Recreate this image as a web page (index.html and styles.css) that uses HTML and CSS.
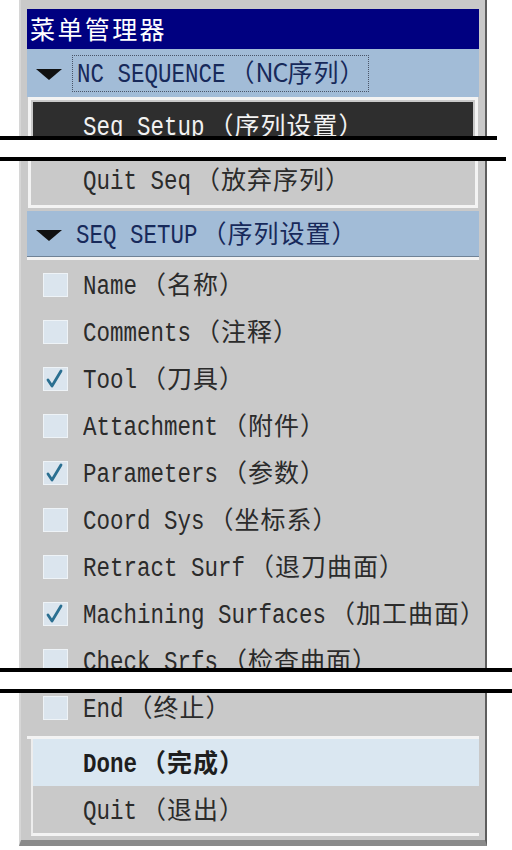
FILE: index.html
```html
<!DOCTYPE html>
<html lang="zh">
<head>
<meta charset="utf-8">
<title>菜单管理器</title>
<link rel="stylesheet" href="styles.css">
</head>
<body>
<div class="panel">
  <div class="title">菜单管理器</div>
  <div class="hdr">
    <span class="tri"></span>
    <span class="focus"><span class="lbl"><span class="en">NC SEQUENCE</span><span class="zh">（<span class="nc">NC</span>序列）</span></span></span>
  </div>
  <div class="group g1">
    <div class="row sel"><span class="lbl"><span class="en">Seq Setup</span><span class="zh">（序列设置）</span></span></div>
    <div class="row quitseq"><span class="lbl"><span class="en">Quit Seq</span><span class="zh">（放弃序列）</span></span></div>
  </div>
  <div class="hdr hdr2">
    <span class="tri"></span>
    <span class="htext"><span class="lbl"><span class="en">SEQ SETUP</span><span class="zh">（序列设置）</span></span></span>
  </div>
  <div class="group g2">
    <div class="row chk"><span class="box"></span><span class="lbl"><span class="en">Name</span><span class="zh">（名称）</span></span></div>
    <div class="row chk"><span class="box"></span><span class="lbl"><span class="en">Comments</span><span class="zh">（注释）</span></span></div>
    <div class="row chk"><span class="box"><svg viewBox="0 0 25 24" width="25" height="24"><path d="M5 13 L9 19 L18 4" fill="none" stroke="#2a6f91" stroke-width="2.8" stroke-linecap="round" stroke-linejoin="round"/></svg></span><span class="lbl"><span class="en">Tool</span><span class="zh">（刀具）</span></span></div>
    <div class="row chk"><span class="box"></span><span class="lbl"><span class="en">Attachment</span><span class="zh">（附件）</span></span></div>
    <div class="row chk"><span class="box"><svg viewBox="0 0 25 24" width="25" height="24"><path d="M5 13 L9 19 L18 4" fill="none" stroke="#2a6f91" stroke-width="2.8" stroke-linecap="round" stroke-linejoin="round"/></svg></span><span class="lbl"><span class="en">Parameters</span><span class="zh">（参数）</span></span></div>
    <div class="row chk"><span class="box"></span><span class="lbl"><span class="en">Coord Sys</span><span class="zh">（坐标系）</span></span></div>
    <div class="row chk"><span class="box"></span><span class="lbl"><span class="en">Retract Surf</span><span class="zh">（退刀曲面）</span></span></div>
    <div class="row chk"><span class="box"><svg viewBox="0 0 25 24" width="25" height="24"><path d="M5 13 L9 19 L18 4" fill="none" stroke="#2a6f91" stroke-width="2.8" stroke-linecap="round" stroke-linejoin="round"/></svg></span><span class="lbl"><span class="en">Machining Surfaces</span><span class="zh">（加工曲面）</span></span></div>
    <div class="row chk"><span class="box"></span><span class="lbl"><span class="en">Check Srfs</span><span class="zh">（检查曲面）</span></span></div>
    <div class="row chk"><span class="box"></span><span class="lbl"><span class="en">End</span><span class="zh">（终止）</span></span></div>
  </div>
  <div class="group g3">
    <div class="row done"><span class="lbl"><span class="en">Done</span><span class="zh">（完成）</span></span></div>
    <div class="row plain"><span class="lbl"><span class="en">Quit</span><span class="zh">（退出）</span></span></div>
  </div>
</div>
<div class="cut cut1"></div>
<div class="cut cut2"></div>
</body>
</html>
```

FILE: styles.css
```css
html, body {
  margin: 0;
  padding: 0;
  background: #ffffff;
}

body {
  position: relative;
  width: 512px;
  height: 850px;
  overflow: hidden;
  font-family: "Liberation Mono", "Noto Sans CJK SC", monospace;
}

.panel {
  margin-left: 19px;
  width: 452px;
  padding: 9px 6px 4px 6px;
  background: #c9c9c9;
  border-left: 2px solid #d6d6d6;
  border-right: 2px solid #5e5e5e;
  border-bottom: 6px solid #8a8a8a;
  box-sizing: content-box;
}

.title {
  height: 40px;
  line-height: 38px;
  background: #000080;
  color: #ffffff;
  font-family: "Noto Sans CJK SC", sans-serif;
  font-size: 25px;
  letter-spacing: 2.4px;
  padding-left: 3px;
}

.lbl {
  display: inline-flex;
  align-items: baseline;
  white-space: pre;
  padding-bottom: 6px;
}

.en {
  display: inline-block;
  font-family: "Liberation Mono", monospace;
  font-size: 22.5px;
  letter-spacing: 0;
  transform: scaleY(1.2);
}

.zh {
  font-family: "Noto Sans CJK SC", sans-serif;
  font-size: 25px;
  letter-spacing: 1px;
  margin-left: 4px;
  position: relative;
  top: 1px;
}

.nc {
  letter-spacing: -1px;
}

.hdr {
  height: 48px;
  background: #a2bcd7;
  display: flex;
  align-items: center;
  color: #17295a;
  padding-left: 9px;
}

.hdr2 {
  margin-top: 3px;
  height: 45px;
  border-bottom: 1px solid #6f8296;
}

.tri {
  width: 0;
  height: 0;
  border-left: 13px solid transparent;
  border-right: 13px solid transparent;
  border-top: 11px solid #111111;
  margin-top: 3px;
}

.focus {
  margin-left: 10px;
  height: 37px;
  padding: 0 2px 0 4px;
  border: 1px dotted #4a5568;
  box-sizing: border-box;
  display: flex;
  align-items: center;
}

.htext {
  margin-left: 14px;
  display: flex;
  align-items: center;
}

.group {
  box-sizing: border-box;
}

.g1 {
  margin: 0 1px;
  border: 3px solid #f3f3f3;
  padding: 2px;
}

.row {
  display: flex;
  align-items: center;
  color: #2b2b2b;
  height: 47px;
}

.sel {
  background: #2e2e2e;
  color: #f2f2f2;
  padding-left: 50px;
}

.quitseq {
  height: 46px;
  margin-top: 8px;
  padding-left: 50px;
}

.g2 {
  border-top: 3px solid #f3f3f3;
  padding: 1px 0 5px 0;
  border-bottom: 3px solid #f3f3f3;
}

.chk {
  padding-left: 16px;
}

.box {
  width: 25px;
  height: 24px;
  margin-right: 15px;
  background: #dbe5ee;
  border: 1px solid #eef3f7;
  box-sizing: border-box;
  display: flex;
  flex: none;
}

.box svg {
  margin: -1px;
}

.g3 {
  border-left: 2px solid #ededed;
  border-bottom: 3px solid #f3f3f3;
  margin-left: 4px;
}

.done {
  background: #dae7f1;
  padding-left: 50px;
  color: #1e1e1e;
}

.done .en,
.done .zh {
  font-weight: bold;
}

.plain {
  padding-left: 50px;
}

.cut {
  position: absolute;
  left: 0;
  height: 25px;
  background: #ffffff;
}

.cut::before,
.cut::after {
  content: "";
  position: absolute;
  left: 0;
  height: 4px;
  background: #000000;
}

.cut::before { top: 0; }
.cut::after { bottom: 0; }

.cut1 {
  top: 136px;
  width: 506px;
}

.cut1::before { width: 497px; }
.cut1::after { width: 506px; }

.cut2 {
  top: 668px;
  width: 512px;
}

.cut2::before,
.cut2::after { width: 512px; }
```
